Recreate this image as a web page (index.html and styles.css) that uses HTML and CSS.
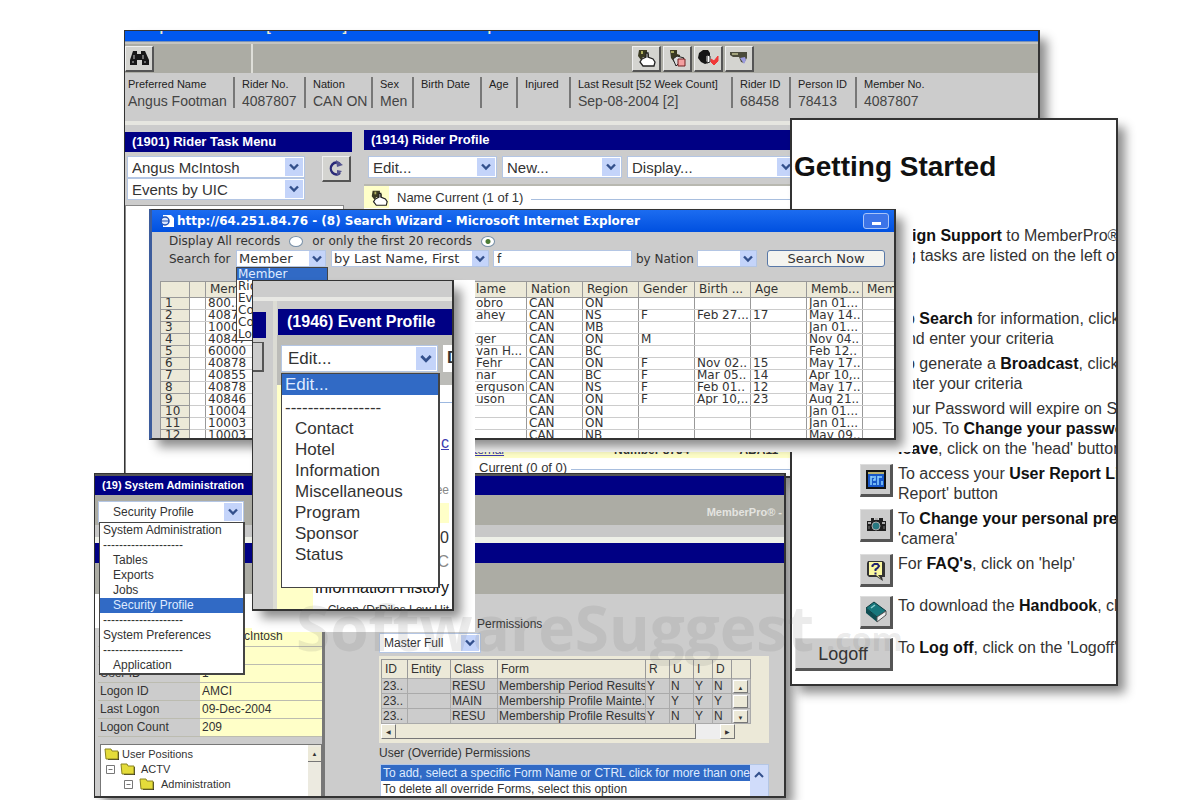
FILE: index.html
```html
<!DOCTYPE html>
<html lang="en">
<head>
<meta charset="utf-8">
<title>MemberPro</title>
<link rel="stylesheet" href="styles.css">
</head>
<body>
<svg width="0" height="0" class="defs" aria-hidden="true">
  <symbol id="chev" viewBox="0 0 12 8"><path d="M2 1.5 6 5.500 10 1.500" fill="none" stroke="#33508c" stroke-width="2.400"/></symbol>
  <symbol id="folder" viewBox="0 0 16 12"><path d="M3 4h12v8H4z" fill="#333"/><path d="M1 1h6l1 2h6v8H2z" fill="#e4dc3a" stroke="#8a8420" stroke-width="1"/></symbol>
  <symbol id="plus" viewBox="0 0 9 9"><path d="M.5.5h8v8h-8zM2.500 4.500h4" fill="#fff" stroke="#777"/></symbol>
  <symbol id="hand" viewBox="0 0 22 20"><path d="M4 2h8v3l2 1v3H8l-2 3-3-4z" fill="#3a3a22"/><path d="M6 3h2v3H6z" fill="#b0b060"/><path d="M7 11l4-2V5h2v4l5 2 2 3-1 4H8l-3-4z" fill="#fff" stroke="#222" stroke-width="1.300"/></symbol>
</svg>
<main class="desktop">

<section class="frame f-rider"><div class="window rider">
  <div class="strip"><span>http://64.251.84.76 - [MemberPro] - Microsoft Internet Explorer</span></div>
  <div class="toolbar">
    <div class="tool-left"><button class="tool" aria-label="Find"><svg width="22" height="18" viewBox="0 0 22 18"><path d="M5 2h4v3h4V2h4l4 9v5h-7v-5h-5v5H2v-5z" fill="#181818"/><path d="M6 6v4M15 6v4M5 12v2M17 12v2" stroke="#8a8a8a" stroke-width="1.500"/></svg></button></div>
    <div class="tool-mid">
      <button class="tool" aria-label="Select"><svg width="22" height="20"><use href="#hand"/></svg></button>
      <button class="tool" aria-label="Copy"><svg width="22" height="20" viewBox="0 0 22 20"><path d="M4 2h7v4l3 1v3H9l-1 4-3-4z" fill="#3a3a22"/><path d="M5 3h3v2H5z" fill="#a8a860"/><path d="M7 11l4-3 7 2-8 8z" fill="#ddd" stroke="#222"/><path d="M12 11h7v7h-7z" fill="#f3a0a0" stroke="#702020"/></svg></button>
      <button class="tool" aria-label="Check"><svg width="24" height="20" viewBox="0 0 24 20"><path d="M3 5l4-3h5l2 3v3h-4v5l2 2-3 1-4-2-3-4z" fill="#151515"/><path d="M11 7l3 1v6l-3 1z" fill="#fff" stroke="#222"/><path d="M15 11l3 2 4-5v5l-4 4-3-3z" fill="#f03838" stroke="#f03838"/></svg></button>
      <button class="tool" aria-label="Point"><svg width="22" height="20" viewBox="0 0 22 20"><path d="M2 4h17v6l-3 5-3-1-2-5H5L2 7z" fill="#4c4c3c"/><path d="M4 5h6v2H4z" fill="#a2a27c"/><path d="M12 10l5-1 1 3-2 4z" fill="#9c9ce0"/></svg></button>
    </div>
  </div>
  <dl class="info">
    <div><dt>Preferred Name</dt><dd>Angus Footman</dd></div>
    <div><dt>Rider No.</dt><dd>4087807</dd></div>
    <div><dt>Nation</dt><dd>CAN ON</dd></div>
    <div><dt>Sex</dt><dd>Men</dd></div>
    <div><dt>Birth Date</dt><dd></dd></div>
    <div><dt>Age</dt><dd></dd></div>
    <div><dt>Injured</dt><dd></dd></div>
    <div><dt>Last Result [52 Week Count]</dt><dd>Sep-08-2004 [2]</dd></div>
    <div><dt>Rider ID</dt><dd>68458</dd></div>
    <div><dt>Person ID</dt><dd>78413</dd></div>
    <div><dt>Member No.</dt><dd>4087807</dd></div>
  </dl>
  <div class="panels">
    <section class="task">
      <h2>(1901) Rider Task Menu</h2>
      <div class="task-tools">
        <div class="stack">
          <div class="sel"><select aria-label="Rider"><option>Angus McIntosh</option></select><i><svg width="12" height="8"><use href="#chev"/></svg></i></div>
          <div class="sel"><select aria-label="Events"><option>Events by UIC</option></select><i><svg width="12" height="8"><use href="#chev"/></svg></i></div>
        </div>
        <button class="tool" aria-label="Refresh"><svg width="20" height="20" viewBox="0 0 20 20"><path d="M14 5a5.500 6 0 1 0 0 9" fill="none" stroke="#2a2a78" stroke-width="2.400"/><path d="M10 1l7 5-6 2zM11 11l5 1-5 5z" fill="#555590"/></svg></button>
      </div>
      <div class="task-list"></div>
    </section>
    <section class="profile">
      <h2>(1914) Rider Profile</h2>
      <div class="profile-tools">
        <div class="sel"><select aria-label="Edit"><option>Edit...</option></select><i><svg width="12" height="8"><use href="#chev"/></svg></i></div>
        <div class="sel"><select aria-label="New"><option>New...</option></select><i><svg width="12" height="8"><use href="#chev"/></svg></i></div>
        <div class="sel"><select aria-label="Display"><option>Display...</option></select><i><svg width="12" height="8"><use href="#chev"/></svg></i></div>
      </div>
      <div class="record"><span class="mark"><svg width="20" height="20" viewBox="0 0 22 20"><use href="#hand"/></svg></span><span>Name Current (1 of 1)</span><hr></div>
      <div class="fill"></div>
      <div class="yellow-row"><a href="#">Internal</a><b>Number 8754</b><b>ABA11</b></div>
      <div class="record low"><span>Current (0 of 0)</span><hr></div>
    </section>
  </div>
</div></section>

<section class="frame f-system"><div class="window system">
  <h2>(19) System Administration</h2>
  <div class="sys-tools">
    <div class="sel"><select aria-label="Section"><option>Security Profile</option></select><i><svg width="12" height="8"><use href="#chev"/></svg></i></div>
    <ul class="menu sys-menu">
      <li>System Administration</li><li>--------------------</li><li class="in">Tables</li><li class="in">Exports</li><li class="in">Jobs</li><li class="in on">Security Profile</li><li>--------------------</li><li>System Preferences</li><li>--------------------</li><li class="in">Application</li>
    </ul>
    <b>MemberPro® -</b>
  </div>
  <div class="sys-gap"></div>
  <div class="sys-bar"></div>
  <div class="sys-sub"></div>
  <div class="sys-body">
    <div class="sys-left">
      <table class="facts">
        <tr><th>Name</th><td class="shift">McIntosh</td></tr>
        <tr><th>Person ID</th><td></td></tr>
        <tr><th>User ID</th><td>1</td></tr>
        <tr><th>Logon ID</th><td>AMCI</td></tr>
        <tr><th>Last Logon</th><td>09-Dec-2004</td></tr>
        <tr><th>Logon Count</th><td>209</td></tr>
      </table>
      <div class="tree">
        <ul>
          <li><svg width="16" height="12"><use href="#folder"/></svg>User Positions</li>
          <li class="l1"><svg width="9" height="9"><use href="#plus"/></svg><svg width="16" height="12"><use href="#folder"/></svg>ACTV</li>
          <li class="l2"><svg width="9" height="9"><use href="#plus"/></svg><svg width="16" height="12"><use href="#folder"/></svg>Administration</li>
        </ul>
        <div class="bar"><button aria-label="Scroll up">▲</button></div>
      </div>
    </div>
    <div class="sys-right">
      <p class="perm">Permissions</p>
      <div class="sel"><select aria-label="Permission set"><option>Master Full</option></select><i><svg width="12" height="8"><use href="#chev"/></svg></i></div>
      <div class="rights">
        <table>
          <colgroup><col class="r1"><col class="r2"><col class="r3"><col class="r4"><col class="r5"><col class="r5"><col class="r6"><col class="r6"><col class="r6"></colgroup>
          <thead><tr><th>ID</th><th>Entity</th><th>Class</th><th>Form</th><th>R</th><th>U</th><th>I</th><th>D</th><th></th></tr></thead>
          <tbody>
            <tr><td>23..</td><td></td><td>RESU</td><td>Membership Period Results</td><td>Y</td><td>N</td><td>Y</td><td>N</td><td><button aria-label="Up">▲</button></td></tr>
            <tr><td>23..</td><td></td><td>MAIN</td><td>Membership Profile Mainte..</td><td>Y</td><td>Y</td><td>Y</td><td>Y</td><td><button aria-label="Thumb"></button></td></tr>
            <tr><td>23..</td><td></td><td>RESU</td><td>Membership Profile Results</td><td>Y</td><td>N</td><td>Y</td><td>N</td><td><button aria-label="Down">▼</button></td></tr>
          </tbody>
        </table>
        <div class="hbar"><button aria-label="Left">◀</button><span></span><em></em><button aria-label="Right">▶</button></div>
      </div>
      <p>User (Override) Permissions</p>
      <div class="override">
        <ul><li class="on">To add, select a specific Form Name or CTRL click for more than one</li><li>To delete all override Forms, select this option</li></ul>
        <div class="up"><svg width="12" height="8" viewBox="0 0 12 8"><path d="M2 6l4-4 4 4" fill="none" stroke="#33508c" stroke-width="2"/></svg></div>
      </div>
    </div>
  </div>
</div></section>

<section class="frame f-start"><div class="window start">
  <h1>Getting Started</h1>
  <ul class="guide">
    <li class="first"><span></span><p><b class="cut">ign Support</b> to MemberPro®<br>ng tasks are listed on the left of</p></li>
    <li><span></span><p>To <b>Search</b> for information, click<br>and enter your criteria</p></li>
    <li><span></span><p>To generate a <b>Broadcast</b>, click<br>enter your criteria</p></li>
    <li><span></span><p>Your Password will expire on Sep<br>2005. To <b>Change your password</b><br><b>leave</b>, click on the 'head' button</p></li>
    <li><span><button class="big" aria-label="User report"><svg width="24" height="24" viewBox="0 0 24 24"><path d="M2 2h20v19H2z" fill="#111"/><path d="M4 4h16v2H4z" fill="#b8b070"/><path d="M4 6h16v13H4z" fill="#1858c8"/><path d="M7 8v9M7 9h3M11 8v4h-2M9 16h3M14 8v9M14 9h4M18 13v4" stroke="#8fd4ff" stroke-width="1.500" fill="none"/></svg></button></span><p>To access your <b>User Report List</b><br>Report' button</p></li>
    <li><span><button class="big" aria-label="Camera"><svg width="24" height="24" viewBox="0 0 24 24"><path d="M3 8h4V5h3v2h5V5h4v3h3v10H3z" fill="#202020"/><path d="M4 9h3v2H4zM18 9h3v2h-3zM11 5h3v2h-3z" fill="#aaa"/><circle cx="12" cy="13" r="4" fill="#287880" stroke="#aaa"/><path d="M5 13v3M20 13v3" stroke="#777"/></svg></button></span><p>To <b>Change your personal preferences</b><br>'camera'</p></li>
    <li><span><button class="big" aria-label="Help"><svg width="24" height="24" viewBox="0 0 24 24"><path d="M4 3h15l2 2v14h-3l1 4-6-4H5l-2-2V5z" fill="#333"/><path d="M5 4h13v13h-4l3 4-5-4H5z" fill="#fbf8a0"/><path d="M8.500 9V7.500l2-1.500h3l1.500 2-1.500 2-2 1.500V13M11.500 14.500v2" fill="none" stroke="#202070" stroke-width="2"/></svg></button></span><p>For <b>FAQ's</b>, click on 'help'</p></li>
    <li><span><button class="big" aria-label="Handbook"><svg width="26" height="24" viewBox="0 0 26 24"><path d="M3 8l8-6 12 9-9 6z" fill="#18777c" stroke="#0b3a3e"/><path d="M3 8v5l11 9v-5z" fill="#0e4d52"/><path d="M14 17l9-6v4l-9 7z" fill="#eee" stroke="#555"/><path d="M8 8l4-3" stroke="#8fd0d0" stroke-width="1.500"/></svg></button></span><p>To download the <b>Handbook</b>, click</p></li>
    <li><span><button class="big logoff">Logoff</button></span><p>To <b>Log off</b>, click on the 'Logoff'</p></li>
  </ul>
</div></section>

<section class="frame f-search"><div class="window search">
  <header class="caption"><svg width="17" height="14" viewBox="0 0 17 14"><path d="M5 1h8l3 3v9H5z" fill="#fff"/><circle cx="7" cy="7" r="4" fill="#dce8ff" stroke="#1c50b8" stroke-width="1.500"/><path d="M3 7h8" stroke="#1c50b8"/></svg><h2>http://64.251.84.76 - (8) Search Wizard - Microsoft Internet Explorer</h2><button aria-label="Minimize"><span></span></button></header>
  <form class="query">
    <div class="line"><label for="all">Display All records</label><input type="radio" id="all" name="n"><label for="first">or only the first 20 records</label><input type="radio" id="first" name="n" checked></div>
    <div class="line two">
      <label for="kind" class="q-label">Search for</label>
      <div class="sel q1"><select id="kind"><option>Member</option></select><i><svg width="12" height="8"><use href="#chev"/></svg></i>
        <ul class="menu kind-menu"><li class="on">Member</li><li>Rider</li><li>Event</li><li>Contact</li><li>Course</li><li>Location</li></ul>
      </div>
      <div class="sel q2"><select aria-label="Search by"><option>by Last Name, First</option></select><i><svg width="12" height="8"><use href="#chev"/></svg></i></div>
      <input type="text" class="q3" value="f" aria-label="Search text">
      <label for="nat" class="q-nat">by Nation</label>
      <div class="sel q4"><select id="nat"><option></option></select><i><svg width="12" height="8"><use href="#chev"/></svg></i></div>
      <button type="button" class="go">Search Now</button>
    </div>
  </form>
  <table class="results">
    <colgroup><col class="c1"><col class="c2"><col class="c3"><col class="c4"><col><col><col><col><col><col><col><col></colgroup>
    <thead><tr><th></th><th></th><th>Mem</th><th></th><th class="n">lame</th><th>Nation</th><th>Region</th><th>Gender</th><th>Birth ...</th><th>Age</th><th>Memb...</th><th>Mem</th></tr></thead>
    <tbody>
      <tr><th>1</th><td></td><td>800...</td><td></td><td class="n">obro</td><td>CAN</td><td>ON</td><td></td><td></td><td></td><td>Jan 01...</td><td></td></tr>
      <tr><th>2</th><td></td><td>4087..</td><td></td><td class="n">ahey</td><td>CAN</td><td>NS</td><td>F</td><td>Feb 27...</td><td>17</td><td>May 14..</td><td></td></tr>
      <tr><th>3</th><td></td><td>1000..</td><td></td><td class="n"></td><td>CAN</td><td>MB</td><td></td><td></td><td></td><td>Jan 01...</td><td></td></tr>
      <tr><th>4</th><td></td><td>40847</td><td></td><td class="n">ger</td><td>CAN</td><td>ON</td><td>M</td><td></td><td></td><td>Nov 04..</td><td></td></tr>
      <tr><th>5</th><td></td><td>60000</td><td></td><td class="n">van H...</td><td>CAN</td><td>BC</td><td></td><td></td><td></td><td>Feb 12..</td><td></td></tr>
      <tr><th>6</th><td></td><td>40878</td><td></td><td class="n">Fehr</td><td>CAN</td><td>ON</td><td>F</td><td>Nov 02..</td><td>15</td><td>May 17..</td><td></td></tr>
      <tr><th>7</th><td></td><td>40855</td><td></td><td class="n">nar</td><td>CAN</td><td>BC</td><td>F</td><td>Mar 05..</td><td>14</td><td>Apr 10,..</td><td></td></tr>
      <tr><th>8</th><td></td><td>40878</td><td></td><td class="n">erguson</td><td>CAN</td><td>NS</td><td>F</td><td>Feb 01..</td><td>12</td><td>May 17..</td><td></td></tr>
      <tr><th>9</th><td></td><td>40846</td><td></td><td class="n">uson</td><td>CAN</td><td>ON</td><td>F</td><td>Apr 10,..</td><td>23</td><td>Aug 21..</td><td></td></tr>
      <tr><th>10</th><td></td><td>10004</td><td></td><td class="n"></td><td>CAN</td><td>ON</td><td></td><td></td><td></td><td>Jan 01...</td><td></td></tr>
      <tr><th>11</th><td></td><td>10003</td><td></td><td class="n"></td><td>CAN</td><td>ON</td><td></td><td></td><td></td><td>Jan 01...</td><td></td></tr>
      <tr><th>12</th><td></td><td>10003</td><td></td><td class="n"></td><td>CAN</td><td>NB</td><td></td><td></td><td></td><td>May 09..</td><td></td></tr>
    </tbody>
  </table>
</div></section>

<section class="frame f-event"><div class="window event">
  <div class="ev-top"></div>
  <div class="ev-cols">
    <div class="ev-side"><div></div><span></span></div>
    <section class="ev-main">
      <h2>(1946) Event Profile</h2>
      <div class="ev-tools">
        <div class="sel"><select aria-label="Edit event"><option>Edit...</option></select><i><svg width="14" height="10" viewBox="0 0 12 8"><use href="#chev"/></svg></i></div>
        <div class="next">D</div>
        <ul class="menu ev-menu"><li class="on">Edit...</li><li>-----------------</li><li class="in">Contact</li><li class="in">Hotel</li><li class="in">Information</li><li class="in">Miscellaneous</li><li class="in">Program</li><li class="in">Sponsor</li><li class="in">Status</li></ul>
      </div>
      <div class="ev-page"><div class="ev-yellow"></div><div class="ev-text"><a href="#" class="e1">c</a><span class="e2">see</span><span class="e3"></span><span class="e4">0</span><span class="e5">y C</span><b>Information History</b><small>Clean (DrDilas Low Uit</small></div></div>
    </section>
  </div>
</div></section>

<div class="watermark">SoftwareSuggest<span>.com</span></div>
</main>
</body>
</html>
```
FILE: styles.css
```css
* { box-sizing: border-box; }
body { margin: 0; background: #fff; color: #333; font-family: "Liberation Sans", Arial, sans-serif; }
h1, h2, p, ul, dl, dd { margin: 0; padding: 0; }
ul { list-style: none; }
button, select, input { font: inherit; color: inherit; }
a { color: #3c3cb0; }
.defs { position: absolute; }
.desktop { position: relative; height: 100vh; min-height: 800px; overflow: hidden; }

/* windows placed freely on the desktop */
.frame { position: absolute; display: flex; background: #fff; isolation: isolate; }
.window { flex: 1; min-width: 0; border: 2px solid #333; border-width: 1px 2px 2px 1px; background: #ccc; box-shadow: 8px 8px 10px -1px rgba(0,0,0,.45); overflow: hidden; white-space: nowrap; }
.f-rider { left: 124px; top: 30px; width: 940px; height: 472px; padding: 0 24px 24px 0; }
.f-system { left: 94px; top: 473px; width: 714px; height: 346px; padding: 0 22px 21px 0; background: none; }
.f-start { left: 790px; top: 118px; width: 350px; height: 590px; padding: 0 22px 22px 0; background: none; }
.f-search { left: 149px; top: 209px; width: 764px; height: 243px; padding: 0 17px 12px 0; }
.f-event { left: 252px; top: 280px; width: 223px; height: 352px; padding: 0 21px 21px 0; }

h2 { background: #000084; color: #fff; font-size: 13px; line-height: 20px; padding: 0 7px; }
.sel { position: relative; display: flex; background: #fff; border: 1px solid #b4c6e4; height: 22px; }
.sel select { flex: 1; min-width: 0; appearance: none; border: 0; background: none; padding: 0 4px; outline: 0; }
.sel i { width: 18px; margin: 1px; background: #c4d4fa; display: grid; place-items: center; pointer-events: none; }
.tool { width: 29px; height: 26px; padding: 0; background: #d4d4d0; border: 1px solid #f0f0f0; border-right: 2px solid #555; border-bottom: 2px solid #555; display: grid; place-items: center; }
.menu { position: absolute; background: #fff; border: 1px solid #444; z-index: 2; }
.on { background: #316ac5; color: #dfeaff; }

/* rider */
.rider { display: flex; flex-direction: column; }
.strip { height: 11px; background: #0058ee; border-bottom: 1px solid #7a93b8; overflow: hidden; display: flex; align-items: flex-start; padding-left: 18px; }
.strip span { color: #e8e8d0; font-size: 13px; font-weight: bold; line-height: 14px; margin-top: -11px; }
.toolbar { height: 31px; background: #acaca4; border-top: 2px solid #c4c4c0; display: flex; align-items: center; }
.tool-left { width: 128px; border-right: 2px solid #deded8; height: 100%; display: flex; align-items: center; }
.tool-mid { display: flex; gap: 2px; flex: 1; padding-left: 379px; }
.info { display: grid; grid-template-columns: 108px 71px 67px 41px 68px 36px 53px 162px 58px 66px 1fr; height: 48px; padding-top: 4px; }
.info > div { height: 31px; padding-left: 7px; border-left: 2px solid #777; color: #444; }
.info > div:first-child { border: 0; padding-left: 3px; }
.info dt { font-size: 11px; line-height: 14px; color: #222; }
.info dd { font-size: 14px; line-height: 20px; }
.panels { flex: 1; display: grid; grid-template-columns: 227px 1fr; gap: 12px; border-top: 4px solid #e6e6e0; padding-top: 5px; }
.task, .profile { display: flex; flex-direction: column; min-width: 0; }
.task { padding-top: 2px; }
.task-tools { display: flex; justify-content: space-between; padding: 4px 1px 5px 2px; font-size: 15px; }
.task-tools .stack { width: 178px; }
.task-list { flex: 1; background: #fff; border: 1px solid #888; margin-right: 8px; }
.profile-tools { display: flex; gap: 5px; padding: 6px 4px 6px; font-size: 15px; border-bottom: 2px solid #b8b8b0; background: #ccc; }
.profile-tools .sel { width: 129px; }
.profile-tools .sel:nth-child(2) { width: 120px; }
.profile-tools .sel:nth-child(3) { width: 170px; }
.profile { background: #fff; }
.record { display: flex; align-items: center; gap: 8px; height: 22px; background: #fff; font-size: 13px; }
.record .mark { width: 25px; height: 22px; background: #ffffc8; display: grid; place-items: end; }
.record hr { flex: 1; border: 0; border-top: 1px solid #a8bede; margin: 5px 0 0; }
.record.low { height: 18px; padding-left: 115px; gap: 4px; border-right: 2px solid #333; width: 428px; }
.fill { flex: 1; background: #fff; }
.yellow-row { height: 14px; background: #ffffc8; display: flex; gap: 50px; padding-left: 100px; font-size: 12px; line-height: 13px; width: 428px; overflow: hidden; }
.yellow-row b:nth-child(2) { margin-left: 60px; }

/* system administration */
.system { display: flex; flex-direction: column; font-size: 12px; }
.system > * { flex: none; }
.system > h2 { font-size: 11px; line-height: 19px; border-top: 2px solid #555; }
.sys-tools { position: relative; display: flex; justify-content: space-between; align-items: center; height: 30px; background: #acaca4; padding: 3px 2px 0 3px; }
.sys-tools > b { color: #e4e4e0; font-size: 11px; }
.sys-tools .sel { width: 146px; }
.sys-tools .sel select { padding-left: 14px; }
.sys-menu { left: 4px; top: 27px; width: 146px; border-width: 1px 2px 2px 1px; }
.sys-menu li { line-height: 15px; padding: 0 3px; }
.sys-menu .in { padding-left: 13px; }
.sys-gap { height: 18px; background: #c8c8c8; border-bottom: 6px solid #eef0e8; }
.sys-bar { height: 20px; background: #000084; }
.sys-sub { height: 31px; background: #acaca4; }
.sys-body { display: grid; grid-template-columns: 227px 1fr; }
.sys-left { padding: 34px 0 0 3px; background: linear-gradient(#fff 34px, #ccc 34px); }
.facts { width: 224px; border-collapse: collapse; table-layout: fixed; }
.facts th { width: 102px; text-align: left; font-weight: normal; }
.facts td { background: #ffffc8; }
.facts th, .facts td { height: 18px; padding: 0 2px; border-bottom: 1px solid #bcbcb0; line-height: 17px; }
.facts .shift { padding-left: 34px; }
.tree { display: flex; margin: 7px 0 0 2px; height: 60px; background: #fff; border: 1px solid #777; border-bottom: 0; }
.tree ul { flex: 1; padding: 2px 3px; font-size: 11px; }
.tree li { display: flex; align-items: center; gap: 2px; height: 15px; }
.tree .l1 { padding-left: 2px; gap: 5px; }
.tree .l2 { padding-left: 20px; gap: 6px; }
.tree .bar { width: 13px; background: #eceae0; }
.tree .bar button { width: 100%; height: 15px; padding: 0; border: 0; border-bottom: 1px solid #777; background: #ece9d8; font-size: 6px; }
.sys-right { border-left: 3px solid #777; padding: 21px 18px 0 54px; }
.sys-right p { line-height: 18px; }
.sys-right .perm { padding-left: 98px; }
.sys-right .sel { width: 102px; height: 20px; }
.rights { background: #ece9d8; margin: 3px 0 1px; padding: 3px 18px 4px 2px; }
.rights table { border-collapse: collapse; table-layout: fixed; width: 100%; border: 1px solid #999; }
.rights .r1 { width: 26px; } .rights .r2 { width: 43px; } .rights .r3 { width: 47px; } .rights .r5 { width: 24px; } .rights .r6 { width: 19px; }
.rights th { height: 19px; text-align: left; font-weight: normal; background: #ece9d8; border-right: 1px solid #999; padding: 0 3px; }
.rights td { height: 15px; line-height: 14px; background: #ccc; border: 1px solid #aaa; padding: 0 1px; overflow: hidden; }
.rights button { padding: 0; width: 15px; height: 13px; border: 1px solid #fff; border-right-color: #777; border-bottom-color: #777; background: #ece9d8; font-size: 6px; display: block; }
.rights .hbar { display: flex; height: 15px; padding-right: 16px; }
.rights .hbar button { height: 15px; }
.hbar span { flex: 1; border-right: 1px solid #777; border-bottom: 1px solid #777; background: #ece9d8; }
.hbar em { width: 24px; background: #eee; }
.override { display: flex; background: #fff; border: 1px solid #b4c6e4; height: 40px; margin-left: 1px; margin-top: 2px; }
.override ul { flex: 1; }
.override li { line-height: 16px; padding-left: 2px; }
.override .up { width: 18px; background: #d0dcfa; padding: 3px; }

/* getting started */
.start { background: #fff; border-width: 2px; color: #333; padding-top: 30px; }
.start h1 { font-size: 28px; line-height: 34px; color: #111; padding-left: 2px; }
.guide { display: grid; gap: 5px; padding-top: 42px; font-size: 16px; line-height: 20px; }
.guide li { display: grid; grid-template-columns: 101px 1fr; column-gap: 5px; min-height: 37px; }
.guide span { display: flex; justify-content: flex-end; align-items: flex-start; }
.guide .first { margin-bottom: 38px; }
.guide b { color: #111; }
.guide .cut { padding-left: 14px; }
.big { width: 33px; height: 33px; padding: 0; background: #ccc; border: 1px solid #ddd; border-right: 3px solid #555; border-bottom: 3px solid #555; display: grid; place-items: center; }
.logoff { width: 98px; font-size: 18px; }

/* search wizard */
.search { font-family: "DejaVu Sans", sans-serif; font-size: 12px; border-left: 3px solid #3c5c9c; display: flex; flex-direction: column; }
.search > * { flex: none; }
.caption { display: flex; align-items: center; gap: 2px; height: 22px; padding: 0 5px 0 6px; background: linear-gradient(#1c6cf0, #0050e0); }
.caption h2 { flex: 1; background: none; font-size: 12px; padding: 0; }
.caption button { width: 26px; height: 16px; padding: 0; border: 1px solid #a8c4f8; border-radius: 3px; background: #3c74e8; display: grid; place-items: end center; }
.caption button span { width: 9px; height: 3px; background: #fff; margin-bottom: 3px; }
.query { height: 49px; padding: 3px 9px 0 17px; }
.line { display: flex; align-items: center; gap: 4px; height: 12px; }
.line input[type=radio] { appearance: none; margin: 0 5px; width: 14px; height: 11px; border: 1px solid #7890a8; border-radius: 50%; background: #fff; }
.line input[type=radio]:checked { background: radial-gradient(circle, #4c7c34 2px, #fff 3px); }
.line.two { height: 17px; margin-top: 3px; gap: 0; }
.search .sel, .q3 { height: 17px; }
.search .sel select, .go { font-size: 13px; }
.search .sel i { width: 16px; margin: 0; }
.search .sel select { padding: 0 2px; }
.q-label { width: 67px; } .q1 { width: 90px; margin-right: 5px; } .q2 { width: 158px; margin-right: 4px; }
.q3 { width: 139px; border: 1px solid #b4c6e4; padding: 0 3px; background: #fff; }
.q-nat { width: 65px; padding-left: 4px; } .q4 { width: 60px; }
.go { margin-left: auto; width: 118px; height: 17px; padding: 0; border: 1px solid #5878a8; border-radius: 3px; background: #f4f4f0; line-height: 13px; }
.kind-menu { left: -1px; top: 16px; width: 92px; }
.kind-menu li { line-height: 12px; padding: 0 1px; }
.results { margin-left: 8px; width: 755px; border-collapse: collapse; table-layout: fixed; }
.results .c1 { width: 29px; } .results .c2 { width: 16px; } .results .c3 { width: 55px; } .results .c4 { width: 210px; }
.results col { width: 56px; }
.results th, .results td { border: 1px solid #999; height: 12px; line-height: 11px; padding: 0 0 0 2px; overflow: hidden; text-align: left; background: #fff; font-weight: normal; }
.results td { border-top-color: #ccc; border-bottom-color: #ccc; }
.results th { background: #ece9d8; padding-left: 4px; }
.results thead th { height: 16px; }
.results .n { padding-left: 5px; }

/* event profile */
.event { display: flex; flex-direction: column; }
.ev-top { flex: none; height: 20px; border-bottom: 4px solid #e8e8e4; }
.ev-cols { flex: 1; min-height: 0; display: grid; grid-template-columns: 24px 1fr; grid-template-rows: 100%; }
.ev-side { border-right: 4px solid #dcdcd4; padding-top: 11px; }
.ev-side div { height: 26px; width: 13px; background: #000084; }
.ev-side span { display: block; width: 11px; height: 30px; margin-top: 4px; border: solid #555; border-width: 1px 2px 2px 0; }
.ev-main { display: flex; flex-direction: column; min-width: 0; min-height: 0; padding-top: 8px; }
.ev-main h2 { flex: none; font-size: 16px; line-height: 26px; padding: 0 9px; margin-left: 1px; }
.ev-tools { flex: none; position: relative; display: flex; gap: 5px; height: 50px; padding: 10px 0 0 4px; background: #bcbcb8; font-size: 17px; }
.ev-tools .sel { width: 157px; height: 27px; flex: none; }
.ev-tools .sel select { padding-left: 6px; }
.ev-tools .sel i { width: 20px; }
.next { background: #fff; flex: 1; height: 27px; padding: 3px 4px; font-weight: bold; overflow: hidden; }
.ev-menu { left: 4px; top: 38px; width: 159px; height: 215px; border-right-width: 2px; }
.ev-menu li { line-height: 21px; padding: 0 3px; }
.ev-menu .in { padding-left: 13px; }
.ev-menu .on { margin-bottom: 2px; }
.ev-page { flex: 1; min-height: 0; display: grid; grid-template-columns: 36px 1fr; background: #fff; overflow: hidden; }
.ev-yellow { background: #ffffc8; }
.ev-text { display: flex; flex-direction: column; align-items: flex-end; border-top: 1px solid #9cb8e0; margin-top: 17px; padding-right: 3px; font-size: 16px; }
.ev-text > * { flex: none; }
.ev-text .e1 { margin-top: 30px; line-height: 20px; }
.e2 { font-size: 12px; line-height: 18px; margin-top: 28px; color: #888; }
.e3 { background: #ffffc8; width: 16px; height: 20px; margin-top: 4px; }
.e4 { line-height: 18px; margin-top: 6px; }
.e5 { line-height: 18px; margin-top: 6px; color: #888; }
.ev-text b { line-height: 18px; margin-top: 8px; font-weight: normal; color: #111; }
.ev-text small { font-size: 12px; line-height: 16px; margin-top: 5px; }

.watermark { position: absolute; left: 296px; top: 596px; font: bold 62px/62px "Open Sans", sans-serif; color: rgba(110,110,110,.14); pointer-events: none; z-index: 5; }
.watermark span { font-size: 32px; padding-left: 12px; }
```
